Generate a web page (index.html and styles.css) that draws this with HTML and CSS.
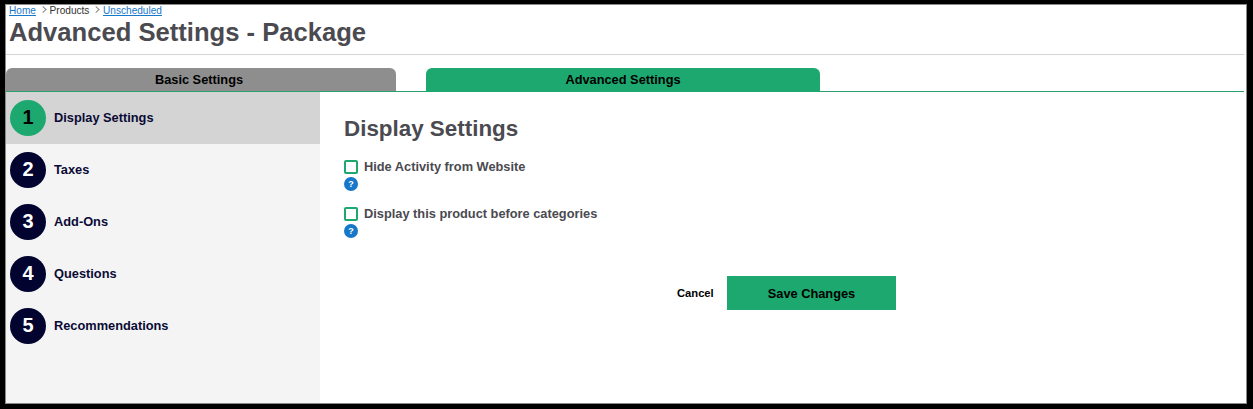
FILE: index.html
```html
<!DOCTYPE html>
<html lang="en">
<head>
    <meta charset="UTF-8">
    <title>Advanced Settings - Package</title>
    <link rel="stylesheet" href="styles.css">
</head>
<body>
    <div class="frame">
        <div class="header">
            <div class="crumbs">
                <a href="#">Home</a>
                <span class="sep"></span>
                <span>Products</span>
                <span class="sep"></span>
                <a href="#">Unscheduled</a>
            </div>
            <h1>Advanced Settings - Package</h1>
        </div>

        <div class="tabs">
            <div class="tab tab-basic">Basic Settings</div>
            <div class="tab tab-advanced">Advanced Settings</div>
        </div>

        <div class="content">
            <div class="sidebar">
                <div class="step active"><span class="num">1</span><span class="step-name">Display Settings</span></div>
                <div class="step"><span class="num">2</span><span class="step-name">Taxes</span></div>
                <div class="step"><span class="num">3</span><span class="step-name">Add-Ons</span></div>
                <div class="step"><span class="num">4</span><span class="step-name">Questions</span></div>
                <div class="step"><span class="num">5</span><span class="step-name">Recommendations</span></div>
            </div>

            <div class="main">
                <h2>Display Settings</h2>

                <div class="option">
                    <label><span class="check"></span>Hide Activity from Website</label>
                    <span class="help">?</span>
                </div>
                <div class="option">
                    <label><span class="check"></span>Display this product before categories</label>
                    <span class="help">?</span>
                </div>

                <div class="actions">
                    <a class="cancel" href="#">Cancel</a>
                    <button type="button" class="save">Save Changes</button>
                </div>
            </div>
        </div>
    </div>
</body>
</html>
```

FILE: styles.css
```css
html, body {
    height: 100%;
}

body {
    margin: 0;
    font-family: "Liberation Sans", Arial, sans-serif;
    background-color: #000;
}

.frame {
    box-sizing: border-box;
    width: 1253px;
    height: 409px;
    border-style: solid;
    border-color: #000;
    border-width: 4px 6px 5px 5px;
    display: flex;
    flex-direction: column;
    background-color: #fff;
    box-shadow: inset 0 0 0 1px #8a8a8a;
    padding: 1px;
}

/* Header */
.header {
    height: 49px;
    margin-right: 2px;
    border-bottom: 1px solid #d4d4d4;
    padding-left: 3px;
}

.crumbs {
    font-size: 10.1px;
    line-height: 11px;
    color: #333;
    white-space: nowrap;
}

.crumbs a {
    color: #1778c9;
}

.sep {
    display: inline-block;
    width: 4px;
    height: 4px;
    margin: 0 0 2px 3px;
    border-top: 1px solid #888;
    border-right: 1px solid #888;
    transform: rotate(45deg) translate(-1px, 1px);
}

h1 {
    margin: 0;
    font-size: 25.6px;
    line-height: 32px;
    color: #4a4a50;
}

/* Tabs */
.tabs {
    display: flex;
    gap: 30px;
    margin-top: 13px;
    height: 23px;
    margin-right: 2px;
    border-bottom: 1px solid #2f9e6e;
}

.tab {
    height: 23px;
    border-radius: 6px 6px 0 0;
    text-align: center;
    font-size: 12.8px;
    font-weight: bold;
    line-height: 24px;
    color: #000;
}

.tab-basic {
    box-sizing: border-box;
    width: 390px;
    padding-right: 4px;
    background-color: #8e8e8e;
}

.tab-advanced {
    width: 394px;
    height: 24px;
    background-color: #1ca86f;
}

/* Sidebar */
.content {
    flex: 1;
    display: flex;
    min-height: 0;
}

.sidebar {
    width: 314px;
    background-color: #f4f4f4;
}

.step {
    height: 52px;
    display: flex;
    align-items: center;
    padding-left: 4px;
    font-size: 12.8px;
    font-weight: bold;
    color: #0a0a35;
}

.step.active {
    background-color: #d4d4d4;
}

.step-name {
    margin-top: -2px;
}

.num {
    width: 36px;
    height: 36px;
    margin-right: 8px;
    border-radius: 50%;
    background-color: #03032f;
    color: #fff;
    font-size: 20px;
    line-height: 35px;
    text-align: center;
}

.active .num {
    background-color: #1ca86f;
    color: #000;
}

/* Main panel */
.main {
    flex: 1;
    padding: 24px 0 0 24px;
}

h2 {
    margin: 0 0 19px;
    font-size: 22.4px;
    line-height: 25px;
    color: #4a4a50;
}

.option {
    height: 47px;
}

.option label {
    display: flex;
    align-items: center;
    font-size: 12.8px;
    font-weight: bold;
    line-height: 14px;
    color: #4a4a50;
}

.check {
    box-sizing: border-box;
    width: 14px;
    height: 14px;
    margin-right: 6px;
    border: 2px solid #1ca86f;
    border-radius: 2px;
    background-color: #fff;
}

.help {
    display: block;
    width: 14px;
    height: 14px;
    margin-top: 3px;
    border-radius: 50%;
    background-color: #1778c9;
    color: #fff;
    font-size: 9px;
    font-weight: bold;
    line-height: 14px;
    text-align: center;
}

.actions {
    display: flex;
    align-items: center;
    margin: 22px 0 0 333px;
}

.cancel {
    width: 37px;
    margin-right: 13px;
    font-size: 11.2px;
    font-weight: bold;
    color: #000;
    text-decoration: none;
}

.save {
    width: 169px;
    height: 34px;
    border: none;
    background-color: #1ca86f;
    color: #000;
    font-family: inherit;
    font-size: 12.8px;
    font-weight: bold;
    cursor: pointer;
}
```
